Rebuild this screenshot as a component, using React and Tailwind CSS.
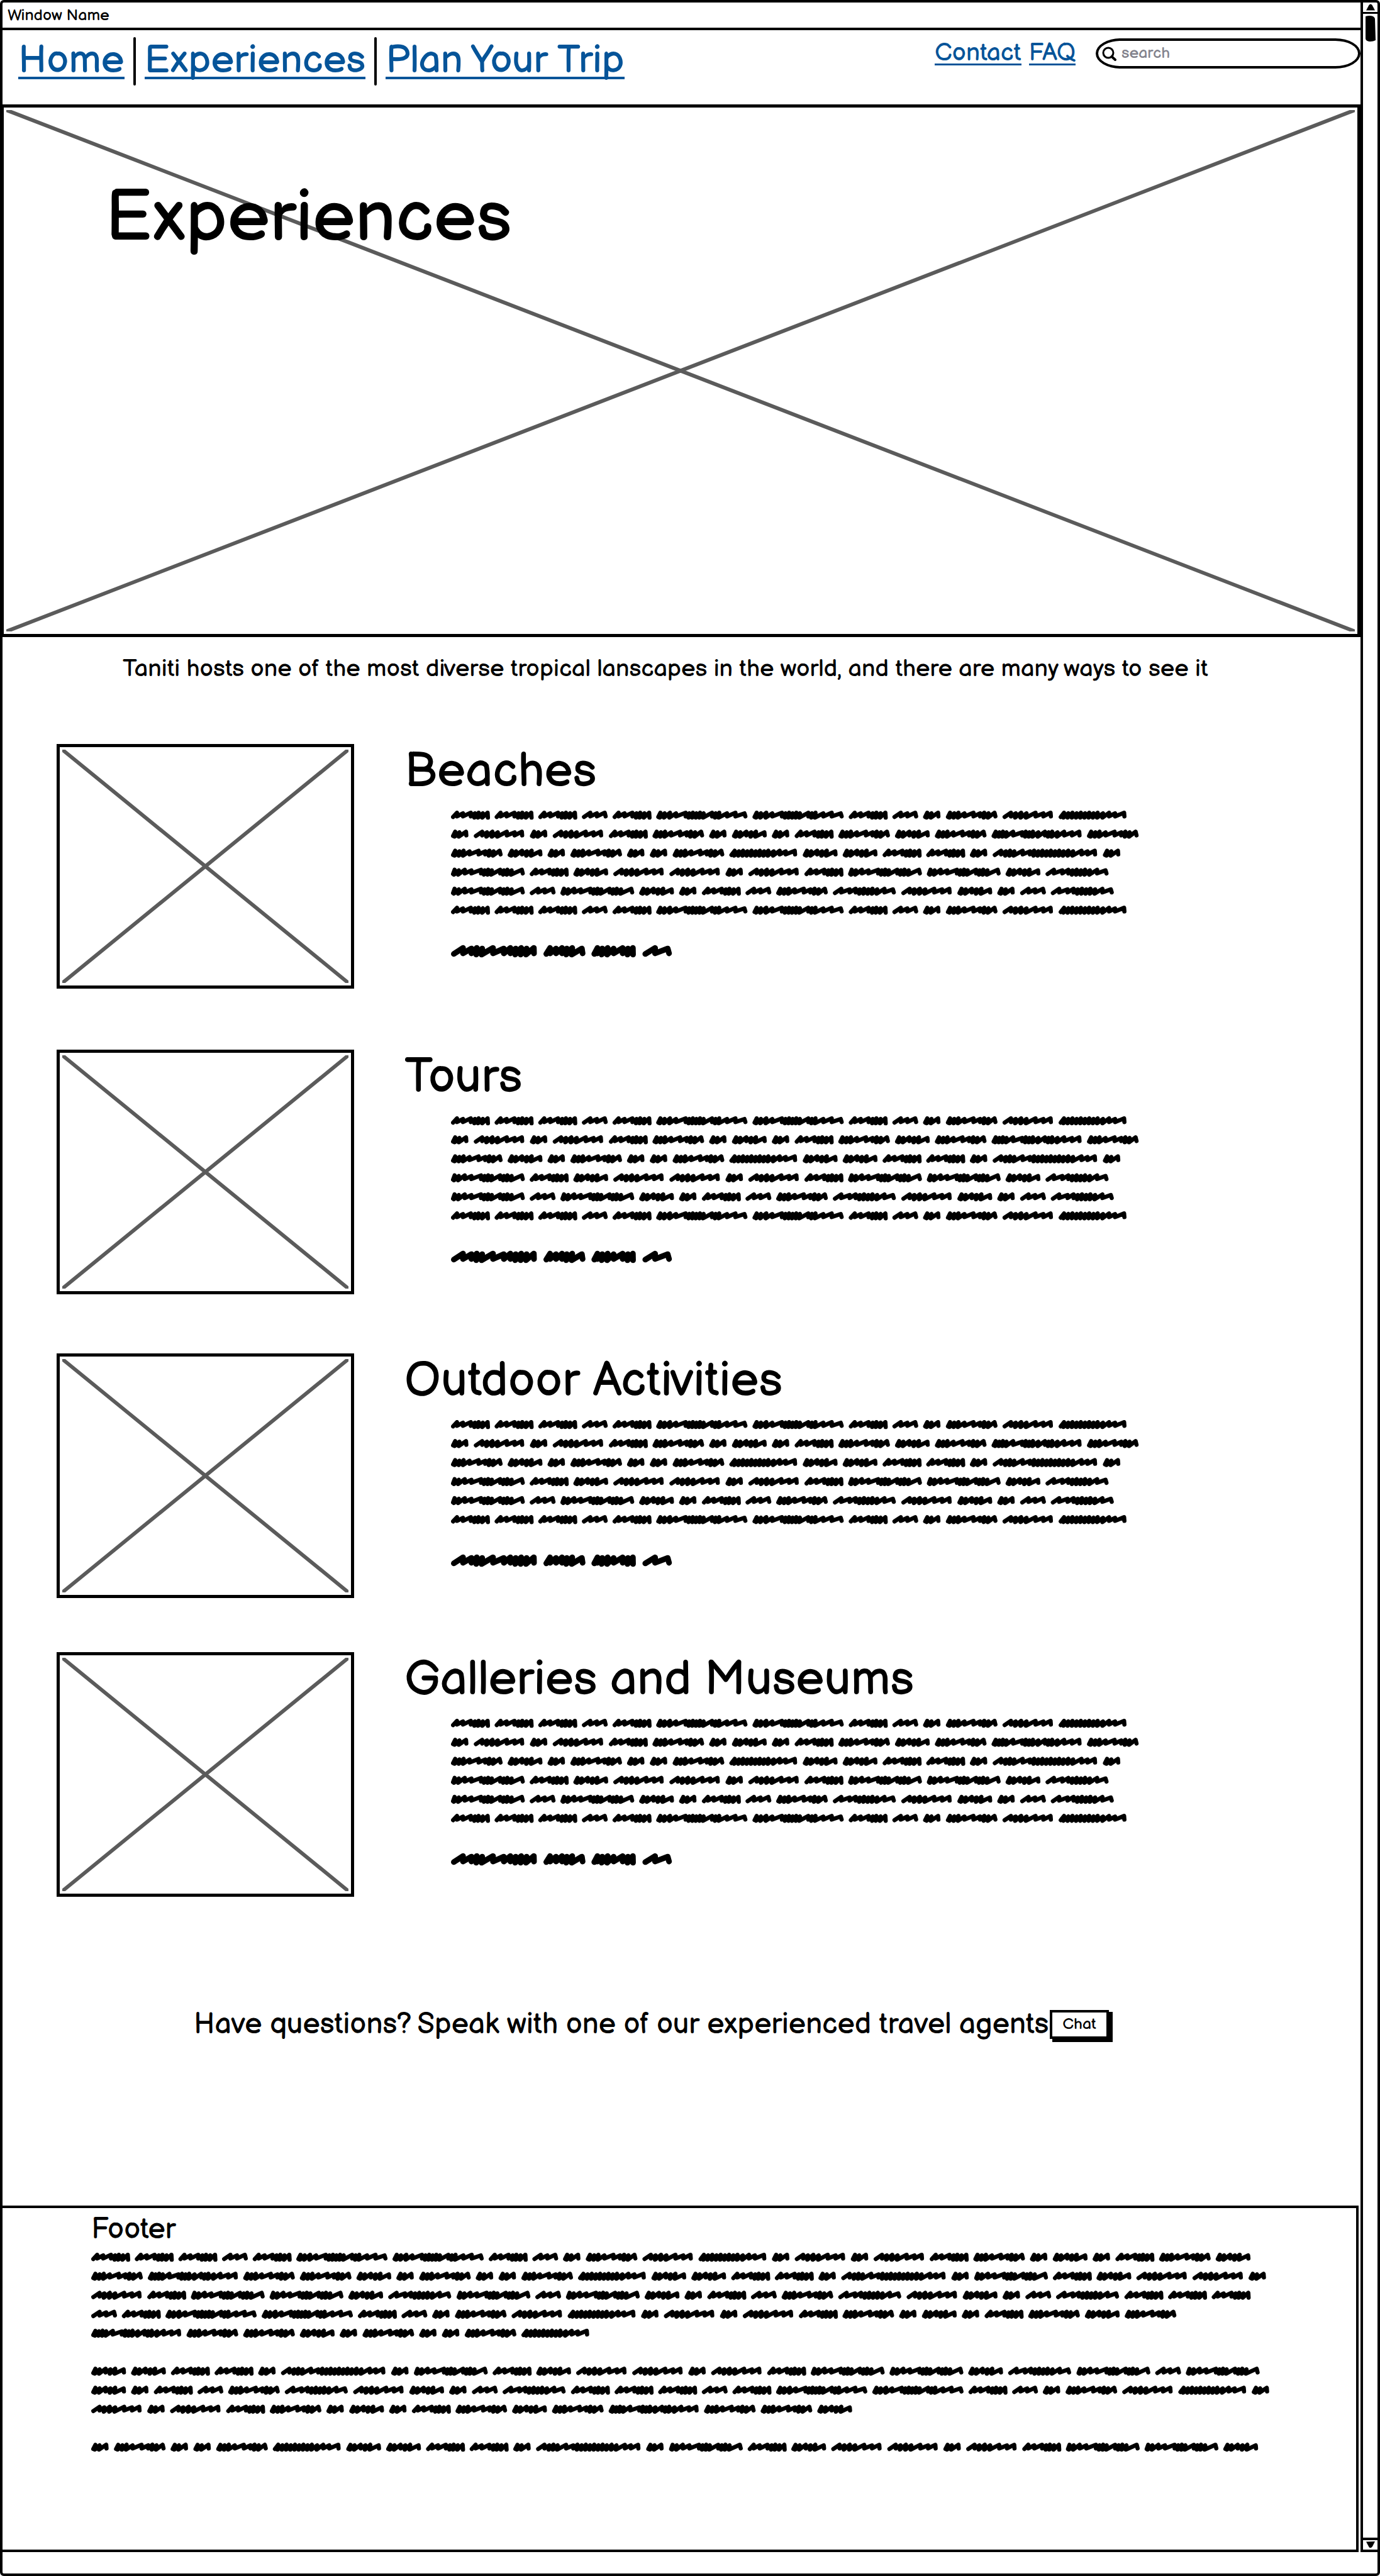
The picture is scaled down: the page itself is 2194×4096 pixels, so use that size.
import React from "react";

// Scribbled placeholder words: advance width, ink width and the x of each peak.
const WORDS = {
  A: { adv: 72.7, w: 65, peaks: [10, 20, 33, 40, 46, 53, 61] },
  B: { adv: 51.1, w: 43, peaks: [14, 25, 38] },
  C: { adv: 160.4, w: 152, peaks: [7, 14, 23, 33, 49, 55, 61, 67, 73, 79, 93, 99, 105, 118, 132, 147] },
  D: { adv: 38, w: 29, peaks: [7, 14, 25] },
  E: { adv: 94.4, w: 86, peaks: [7, 14, 21, 31, 46, 57, 64, 71, 81] },
  F: { adv: 93.5, w: 84, peaks: [14, 22, 31, 40, 55, 68, 80] },
  G: { adv: 66.5, w: 58, peaks: [7, 14, 24, 32, 40, 54] },
  H: { adv: 131.2, w: 123, peaks: [6, 13, 23, 34, 50, 56, 62, 68, 82, 88, 94, 101, 118] },
  I: { adv: 122.4, w: 113, peaks: [9, 16, 23, 30, 37, 44, 51, 58, 65, 74, 84, 94, 109] },
  J: { adv: 159, w: 150, peaks: [7, 13, 19, 25, 36, 51, 57, 63, 69, 78, 89, 95, 101, 110, 121, 134, 146] },
  K: { adv: 183.6, w: 174, peaks: [14, 22, 29, 36, 50, 62, 69, 76, 83, 90, 97, 104, 111, 118, 126, 134, 148, 158, 170] },
  L: { adv: 114, w: 105, peaks: [14, 28, 38, 45, 52, 59, 66, 74, 86, 100] },
  M: { adv: 154, w: 143, peaks: [20, 34, 43, 52, 70, 88, 99, 108, 117, 126, 138] },
  N: { adv: 80, w: 70, peaks: [11, 21, 31, 39, 48, 64] },
  O: { adv: 85, w: 74, peaks: [10, 18, 27, 37, 52, 61, 69] },
  P: { adv: 54, w: 49, peaks: [21, 42] },
};

function wordPath(word, x, y, height, pen) {
  const half = pen / 2;
  const top = y + half;
  const bottom = y + height - half;
  let d = `M${x + half} ${bottom - 1}`;
  word.peaks.forEach((peak, i) => {
    const tight = peak - (i > 0 ? word.peaks[i - 1] : 0) < 10;
    const low = i + 1 < word.peaks.length ? x + peak - (tight ? 1 : 0) : x + word.w - half;
    d += `L${x + peak} ${top + (i % 2)}`;
    d += `L${low} ${tight ? bottom : bottom - 2}`;
  });
  return d;
}

function linePath(line, y, height, pen) {
  let x = 0;
  let d = "";
  for (const key of line) {
    d += wordPath(WORDS[key], x, y, height, pen);
    x += WORDS[key].adv;
  }
  return d;
}

const PITCH = 31.67;

function Scribble({ lines, link, width, height, className }) {
  return (
    <svg
      viewBox={`0 0 ${width} ${height}`}
      className={className}
      fill="none"
      stroke="black"
      strokeLinecap="round"
      strokeLinejoin="round"
      role="img"
      aria-label="Placeholder text"
    >
      {lines.map((line, i) =>
        line ? <path key={i} strokeWidth="7" d={linePath(line, i * PITCH, 15, 7)} /> : null
      )}
      {link ? <path strokeWidth="9.5" d={linePath(link, 224, 20.5, 9.5)} /> : null}
    </svg>
  );
}

const BODY_LINES = [
  "AAABACCABDEFI",
  "DFDFAEDGDAEGEJE",
  "EGDEDDEIGGAADKD",
  "HAGFFDFAHHGL",
  "HBHGDABELFGDBL",
  "AAABACCABDEFI",
];

const FOOTER_LINES = [
  "AAABACCABDEFIDFDFAEDGDAEG",
  "EJEEGDEDDEIGGAADKDHAGFFD",
  "FAHHGLHBHGDABELFGDBLAAA",
  "BACCABDEFIDFDFAEDGDAEGE",
  "JEEGDEDDEI",
  "",
  "GGAADKDHAGFFDFAHHGLHBH",
  "GDABELFGDBLAAABACCABDEFID",
  "FDFAEDGDAEGEJEEG",
  "",
  "DEDDEIGGAADKDHAGFFDFAHHG",
];

const SECTIONS = [
  { title: "Beaches", gap: "mt-[70px]" },
  { title: "Tours", gap: "mt-[97px]" },
  { title: "Outdoor Activities", gap: "mt-[94px]" },
  { title: "Galleries and Museums", gap: "mt-[86px]" },
];

function Cross() {
  return (
    <svg
      className="absolute inset-1 h-[calc(100%-8px)] w-[calc(100%-8px)]"
      viewBox="0 0 100 100"
      preserveAspectRatio="none"
      stroke="#5b5b5b"
      strokeWidth="6"
      aria-hidden="true"
    >
      <path d="M0 0L100 100M0 100L100 0" vectorEffect="non-scaling-stroke" />
    </svg>
  );
}

function Scrollbar() {
  return (
    <div className="flex w-[27px] shrink-0 flex-col border-l-4 border-black" aria-hidden="true">
      <div className="flex h-[18px] items-start justify-center border-b-[3px] border-black pt-0.5">
        <svg width="14" height="11" viewBox="0 0 14 11">
          <path d="M0 10.5L4.5 2Q7-1 9.500 2L14 10.500Z" />
        </svg>
      </div>
      <svg className="ml-1 mt-[3px]" width="16" height="41" viewBox="0 0 16 41">
        <path d="M0 1Q7-1 12 1Q15 3 15 5L16 39Q10 42 4 40.500Q0 39 0 36Z" />
      </svg>
      <div className="mt-auto flex h-[23px] items-start justify-center border-y-[4px] border-black pt-0.5">
        <svg width="14" height="11" viewBox="0 0 14 11">
          <path d="M0 0.500L14 0L10 8Q7 12 4.500 9Z" />
        </svg>
      </div>
    </div>
  );
}

function NavLink({ children }) {
  return (
    <a href="#" className="mt-[3px] h-16 border-b-4 border-[#055499] text-[62px] leading-[70px]">
      {children}
    </a>
  );
}

function SmallLink({ children }) {
  return (
    <a href="#" className="h-[43px] border-b-[3px] border-[#055499] text-[39px] leading-[48px]">
      {children}
    </a>
  );
}

export default function App() {
  return (
    <div className="flex min-h-screen flex-col rounded-md border-4 border-black bg-white font-['Balsamiq_Sans','Lato',sans-serif] text-black">
      <div className="flex grow">
        <div className="flex min-w-0 grow flex-col">
          <div className="h-11 border-b-4 border-black pl-2 text-[25px] leading-[42px]">Window Name</div>

          <header className="flex h-[118px] items-start justify-between pl-[25px]">
            <nav className="flex items-start gap-[14px] pt-[11px] text-[#055499]">
              <NavLink>Home</NavLink>
              <span className="h-[77px] w-1 rounded-full bg-black" />
              <NavLink>Experiences</NavLink>
              <span className="h-[77px] w-1 rounded-full bg-black" />
              <NavLink>Plan Your Trip</NavLink>
            </nav>
            <div className="flex items-start pt-[13px] text-[#055499]">
              <div className="flex gap-3">
                <SmallLink>Contact</SmallLink>
                <SmallLink>FAQ</SmallLink>
              </div>
              <label className="ml-8 flex h-12 w-[421px] items-center rounded-[40px/24px] border-4 border-black pl-1.5">
                <svg width="23" height="23" viewBox="0 0 23 23" fill="none" stroke="black" strokeWidth="3" strokeLinecap="round">
                  <circle cx="10" cy="10" r="8" />
                  <path d="M15.500 16L21 21" strokeWidth="4" />
                </svg>
                <input
                  type="text"
                  aria-label="Search"
                  placeholder="search"
                  className="ml-2 min-w-0 grow text-[25px] leading-8 text-black outline-none placeholder:text-[#82828c]"
                />
              </label>
            </div>
          </header>

          <section className="relative h-[847px] border-[5px] border-l-2 border-black">
            <Cross />
            <h1 className="relative pl-[161px] pt-[117px] text-[114px] leading-[120px]">Experiences</h1>
          </section>

          <p className="mt-[29px] pl-[191px] text-[38px] leading-[44px]">
            Taniti hosts one of the most diverse tropical lanscapes in the world, and there are many ways to see it
          </p>

          <main className="pt-[27px]">
            {SECTIONS.map((s) => (
              <article key={s.title} className={`flex items-start pl-[86px] ${s.gap}`}>
                <div className="relative h-[389px] w-[473px] shrink-0 border-[5px] border-black">
                  <Cross />
                </div>
                <div className="min-w-0 grow pl-[80px]">
                  <h2 className="text-[76px] leading-[90px]">{s.title}</h2>
                  <Scribble
                    lines={BODY_LINES}
                    link="MNOP"
                    width={1160}
                    height={248}
                    className="ml-[74px] mt-[16px] w-[1107px]"
                  />
                </div>
              </article>
            ))}
          </main>

          <div className="mt-[180px] flex items-start gap-0.5 pl-[304px]">
            <p className="text-[46px] leading-[48px]">Have questions? Speak with one of our experienced travel agents</p>
            <button className="h-[46px] border-4 border-black px-4 text-[25px] leading-9 shadow-[5px_4px_0_1px_black]">Chat</button>
          </div>

          <footer className="mr-[3px] mt-auto h-[551px] border-y-4 border-r-4 border-black pl-[141px] pt-2">
            <h2 className="text-[46px] leading-[54px]">Footer</h2>
            <Scribble lines={FOOTER_LINES} width={1968} height={332} className="mt-[9px] w-[1877px]" />
          </footer>
        </div>
        <Scrollbar />
      </div>
      <div className="h-[34px] shrink-0" />
    </div>
  );
}
